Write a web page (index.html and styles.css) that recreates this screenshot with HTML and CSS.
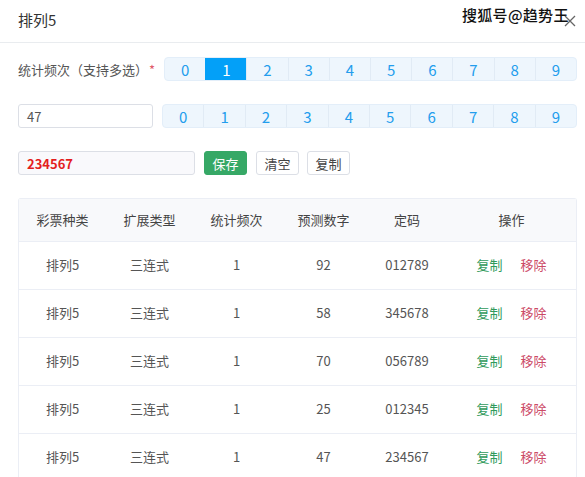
FILE: index.html
```html
<!DOCTYPE html>
<html lang="zh">
<head>
<meta charset="utf-8">
<link rel="stylesheet" href="styles.css">
</head>
<body>
<div class="dialog">
  <div class="header">
    <span class="title">排列5</span>
    <span class="watermark">搜狐号@趋势王</span>
    <svg class="close" width="12" height="12" viewBox="0 0 12 12"><path d="M1 1 L11 11 M11 1 L1 11" stroke="#666" stroke-width="1.3" fill="none"/></svg>
  </div>
  <div class="body">
    <div class="row">
      <div class="label">统计频次（支持多选）<span class="star">*</span></div>
      <div class="group g1">
        <span class="cell">0</span><span class="cell active">1</span><span class="cell">2</span><span class="cell">3</span><span class="cell">4</span><span class="cell">5</span><span class="cell">6</span><span class="cell">7</span><span class="cell">8</span><span class="cell">9</span>
      </div>
    </div>
    <div class="row">
      <div class="input num">47</div>
      <div class="group g2">
        <span class="cell">0</span><span class="cell">1</span><span class="cell">2</span><span class="cell">3</span><span class="cell">4</span><span class="cell">5</span><span class="cell">6</span><span class="cell">7</span><span class="cell">8</span><span class="cell">9</span>
      </div>
    </div>
    <div class="row">
      <div class="input code">234567</div>
      <button class="btn save">保存</button>
      <button class="btn plain">清空</button>
      <button class="btn plain">复制</button>
    </div>
    <div class="table">
      <div class="tr th">
        <div>彩票种类</div><div>扩展类型</div><div>统计频次</div><div>预测数字</div><div>定码</div><div>操作</div>
      </div>
      <div class="tr"><div>排列5</div><div>三连式</div><div>1</div><div>92</div><div>012789</div><div class="ops"><span class="copy">复制</span><span class="del">移除</span></div></div>
      <div class="tr"><div>排列5</div><div>三连式</div><div>1</div><div>58</div><div>345678</div><div class="ops"><span class="copy">复制</span><span class="del">移除</span></div></div>
      <div class="tr"><div>排列5</div><div>三连式</div><div>1</div><div>70</div><div>056789</div><div class="ops"><span class="copy">复制</span><span class="del">移除</span></div></div>
      <div class="tr"><div>排列5</div><div>三连式</div><div>1</div><div>25</div><div>012345</div><div class="ops"><span class="copy">复制</span><span class="del">移除</span></div></div>
      <div class="tr"><div>排列5</div><div>三连式</div><div>1</div><div>47</div><div>234567</div><div class="ops"><span class="copy">复制</span><span class="del">移除</span></div></div>
    </div>
  </div>
</div>
</body>
</html>
```
FILE: styles.css
```css
html, body {
  margin: 0;
  padding: 0;
  background: #fff;
  font-family: "Noto Sans CJK SC", "Noto Sans", sans-serif;
  color: #555;
  font-size: 13px;
  overflow: hidden;
}
.dialog {
  width: 585px;
  height: 477px;
}
.header {
  position: relative;
  height: 43px;
  border-bottom: 1px solid #e9ecef;
  display: flex;
  align-items: center;
  padding: 0 18px;
  box-sizing: border-box;
}
.title {
  font-size: 15px;
  color: #333;
  margin-top: -4px;
}
.close {
  position: absolute;
  left: 564px;
  top: 15px;
}
.watermark {
  position: absolute;
  left: 462px;
  top: 4px;
  font-size: 15px;
  font-weight: 500;
  color: #111;
  letter-spacing: 0.3px;
  text-shadow: 1px 1px 0 #fff, -1px -1px 0 #fff, 1px -1px 0 #fff, -1px 1px 0 #fff;
}
.body {
  padding: 14px 8px 0 18px;
  display: flex;
  flex-direction: column;
  gap: 23px;
}
.row {
  display: flex;
  align-items: center;
  height: 24px;
}
.label {
  width: 146px;
  color: #555;
  font-size: 13px;
}
.star {
  color: #e05a6a;
  margin-left: 1px;
}
.group {
  display: flex;
  flex: 1;
  height: 24px;
  background: #eef6fd;
  border: 1px solid #e3eef9;
  border-radius: 4px;
  overflow: hidden;
  box-sizing: border-box;
}
.g2 {
  margin-left: 9px;
}
.cell {
  flex: 1;
  display: flex;
  align-items: center;
  justify-content: center;
  color: #229ded;
  font-size: 15px;
  border-left: 1px solid #e1ebf5;
}
.cell:first-child {
  border-left: none;
}
.cell.active {
  background: #03a0f8;
  color: #fff;
  border-left-color: #03a0f8;
}
.input {
  height: 24px;
  box-sizing: border-box;
  border: 1px solid #dcdfe6;
  border-radius: 3px;
  display: flex;
  align-items: center;
  padding-left: 8px;
}
.num {
  width: 135px;
  color: #555;
  font-size: 13px;
}
.code {
  width: 177px;
  background: #f9f9fc;
  color: #e41e1e;
  font-weight: bold;
  font-size: 13px;
}
.btn {
  height: 24px;
  box-sizing: border-box;
  border-radius: 3px;
  font-family: inherit;
  font-size: 13px;
  padding: 0;
  margin-left: 9px;
  cursor: pointer;
  white-space: nowrap;
}
.save {
  background: #36a866;
  border: 1px solid #36a866;
  color: #fff;
  width: 43px;
}
.plain {
  background: #fff;
  border: 1px solid #dcdfe6;
  color: #444;
  width: 43px;
}
.plain:last-child {
  margin-left: 8px;
}
.table {
  border: 1px solid #ebeef5;
  border-bottom: none;
  border-radius: 3px 3px 0 0;
}
.tr {
  display: grid;
  grid-template-columns: 87px 87px 87px 87px 80px 1fr;
  height: 48px;
  box-sizing: border-box;
  border-top: 1px solid #ebeef5;
  align-items: center;
  text-align: center;
  color: #555;
  padding-bottom: 2px;
}
.tr.th {
  height: 42px;
  border-top: none;
  background: #f8f9fb;
  color: #444;
  padding-bottom: 1px;
}
.ops {
  display: flex;
  justify-content: center;
  gap: 18px;
}
.copy {
  color: #2f9a5b;
}
.del {
  color: #cc4a66;
}
```
